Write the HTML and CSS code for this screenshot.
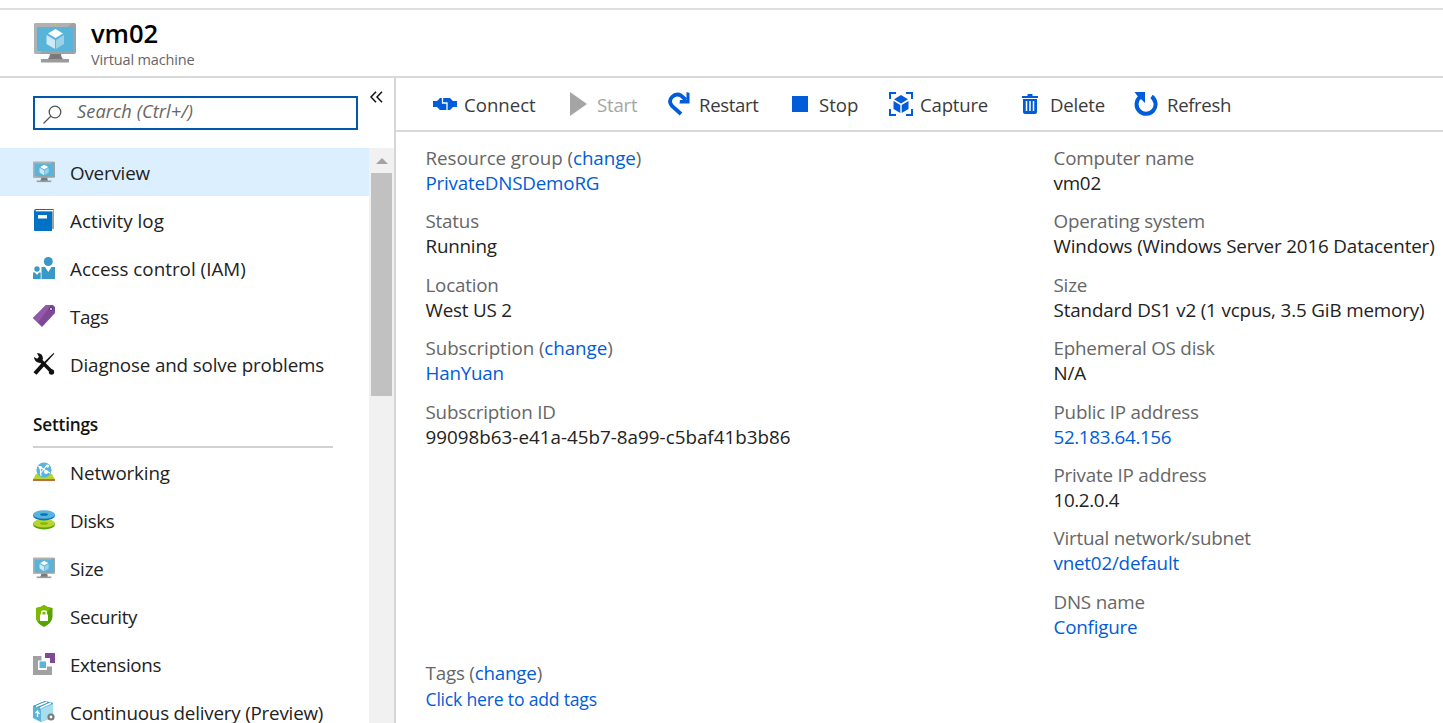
FILE: index.html
```html
<!DOCTYPE html>
<html lang="en">
<head>
<meta charset="utf-8">
<title>vm02 - Virtual machine</title>
<link rel="stylesheet" href="styles.css">
</head>
<body>
<svg width="0" height="0" class="defs">
  <symbol id="vm" viewBox="0 0 42 40">
    <rect width="42" height="31" rx="2" fill="#a0a1a2"/>
    <path d="M2 0H38L5 31H2Q0 31 0 29V2Q0 0 2 0Z" fill="#b0b1b2"/>
    <rect x="3" y="4" width="36" height="24" fill="#59b4d9"/>
    <path d="M16 31H27V36H35V39.500H7V36H14Q16 35 16 31Z" fill="#999b9c"/>
    <path d="M16 31H27Q27 34 29 36H14Q16 34 16 31Z" fill="#7a7a7a"/>
    <path d="M21.500 6 29 10.500 21.500 15 14 10.500Z" fill="#fff"/>
    <path d="M12.500 12 21 17V26L12.500 21Z" fill="#cde9f4"/>
    <path d="M30 12 22 17V26L30 21Z" fill="#9bd2e8"/>
    <circle cx="21" cy="1.800" r="1" fill="#b8d432"/>
  </symbol>
</svg>
<div class="page">
  <header class="header">
    <svg class="header-icon"><use href="#vm"/></svg>
    <div>
      <h1 class="title">vm02</h1>
      <p class="subtitle">Virtual machine</p>
    </div>
  </header>
  <div class="body">
    <nav class="sidebar">
      <div class="search-row">
        <div class="search">
          <svg width="20" height="20" viewBox="0 0 20 20" fill="none" stroke="#555" stroke-width="1.300"><circle cx="12" cy="7" r="5.800"/><path d="M8 11 .5 18.500"/></svg>
          <span>Search (Ctrl+/)</span>
        </div>
        <svg class="collapse" width="13" height="12" viewBox="0 0 13 12" fill="none" stroke="#111" stroke-width="1.500"><path d="M6 .7 1 6l5 5.300M12 .7 7 6l5 5.300"/></svg>
      </div>
      <div class="menu-wrap">
        <div class="menu">
          <a class="item active"><svg viewBox="0 0 42 40"><use href="#vm"/></svg><span>Overview</span></a>
          <a class="item"><svg viewBox="0 0 22 22"><path d="M3 1H21V20H19V3H2Z" fill="#a0a1a2"/><path d="M3 1H20V2.500H3Z" fill="#fff"/><path d="M1 2Q1 0 3 0H20.500V1H3Q2 1.700 3 2.500H19V22H2Q1 22 1 21Z" fill="#0072c6"/><path d="M5 6H14V9.500H5Z" fill="#fff"/></svg><span class="wide">Activity log</span></a>
          <a class="item"><svg viewBox="0 0 22 22" fill="#3999c6"><circle cx="15.300" cy="4.500" r="4.500"/><path d="M8.500 10H12L15.300 15 18.500 10H22V22H8.500Z"/><circle cx="4" cy="12" r="2.700"/><path d="M0 15.500H2L4 18 6 15.500H7.700V22H0Z"/></svg><span class="wide">Access control (IAM)</span></a>
          <a class="item"><svg viewBox="0 0 22 22"><path d="M13 0H20L22 2V8L9 22 0 13Z" fill="#804998"/><path d="M13 0H18L5 17.500 0 13Z" fill="#9159a8"/><circle cx="18" cy="4" r="1.500" fill="#fff" stroke="#4e2864"/></svg><span class="tight">Tags</span></a>
          <a class="item"><svg viewBox="0 0 22 22"><path d="M20.500 0 21.300.8 12 11 10.700 9.600Z" fill="#111"/><path d="M2 20.500 10 11.500" stroke="#111" stroke-width="4"/><path d="M5 5 19 19" stroke="#111" stroke-width="3.600"/><path d="M4 0Q10 0 10 6L7 10Q1 9 1 4L4.500 6 6 4Z" fill="#111"/><circle cx="18.500" cy="19" r="2.700" fill="#111"/></svg><span class="even">Diagnose and solve problems</span></a>
          <h2 class="section"><span>Settings</span></h2>
          <a class="item"><svg viewBox="0 0 22 22"><path d="M3 13H19L22 18.500H0Z" fill="#b8d432"/><path d="M0 18H22V20H0Z" fill="#b9713c"/><circle cx="11" cy="9" r="7.600" fill="#59b4d9"/><g fill="none" stroke="#fff" stroke-width="1.100"><path d="M5 5 17 12M7 13 14 4M7 6 8 15"/></g><g fill="#fff"><circle cx="7.500" cy="6.500" r="1.600"/><circle cx="14.500" cy="5" r="1.600"/><circle cx="13" cy="11" r="2"/></g></svg><span class="even">Networking</span></a>
          <a class="item"><svg viewBox="0 0 22 22"><ellipse cx="11" cy="15.700" rx="11" ry="4.700" fill="#57a300"/><ellipse cx="11" cy="14.200" rx="11" ry="4.300" fill="#b8d432"/><ellipse cx="11" cy="14.500" rx="4" ry="1.300" fill="#7fba00"/><ellipse cx="11" cy="6.800" rx="11" ry="4.700" fill="#0072c6"/><ellipse cx="11" cy="5.500" rx="11" ry="4.300" fill="#59b4d9"/><ellipse cx="11" cy="5.500" rx="4" ry="1.300" fill="#0072c6"/></svg><span class="tight">Disks</span></a>
          <a class="item"><svg viewBox="0 0 42 40"><use href="#vm"/></svg><span>Size</span></a>
          <a class="item"><svg viewBox="0 0 22 22"><path d="M11 0Q15 3 19.500 3V12Q19 18 11 22 3 18 3 12V3Q7 3 11 0Z" fill="#57a300"/><path d="M11 0Q15 3 18 3L5 17Q3 15 3 12V3Q7 3 11 0Z" fill="#7fba00"/><path d="M7 9.500H15V16H7Z" fill="#fff"/><path d="M8.700 10V7.500Q8.700 6 11 6T13.300 7.500V10" fill="none" stroke="#fff" stroke-width="1.500"/></svg><span class="tight">Security</span></a>
          <a class="item"><svg viewBox="0 0 22 22"><path d="M0 3H8.500V7.500H5V17H14V13.500H19V22H0Z" fill="#a0a1a2"/><path d="M12 0H22V10H17V5H12Z" fill="#804998"/><path d="M6.500 8.500H13V15H6.500Z" fill="#59b4d9"/></svg><span class="tight">Extensions</span></a>
          <a class="item"><svg viewBox="0 0 22 22"><path d="M0 5 12 0 20 2V16L8 21 0 17Z" fill="#59b4d9"/><path d="M8 8 20 3V16L8 21Z" fill="#a9dcef"/><path d="M0 5 12 0 20 2 8 7Z" fill="#3999c6"/><path d="M3 5.500 14 1M7 7 18 2" stroke="#fff" stroke-width="1.500"/><path d="M4.500 16V10M2.500 12 4.500 10 6.500 13" stroke="#fff" fill="none" stroke-width="1.300"/><circle cx="18" cy="16" r="2.500" fill="#fff" stroke="#7a7a7a" stroke-width="2.200"/></svg><span>Continuous delivery (Preview)</span></a>
        </div>
        <div class="scrollbar"><i class="arrow"></i><i class="thumb"></i></div>
      </div>
    </nav>
    <main class="main">
      <div class="toolbar">
        <a class="cmd connect"><svg width="24" height="24" viewBox="0 0 24 24"><path d="M0 9H4L7 6H17L20 9H24V15H20L17 18H7L4 15H0Z" fill="#015cda"/><path d="M9.500 6V11H14V18" fill="none" stroke="#fff" stroke-width="1.300"/></svg><span>Connect</span></a>
        <a class="cmd start"><svg width="17" height="24" viewBox="0 0 17 24"><path d="M0 0 17 12 0 24Z" fill="#a5a5a5"/></svg><span>Start</span></a>
        <a class="cmd restart"><svg width="22" height="24" viewBox="0 0 22 24"><path d="M13 22 4 14Q0 9 4 5T13 3.500L18 8" fill="none" stroke="#015cda" stroke-width="3.800"/><path d="M18.500 0 21.500 1V11.500H11.500L12 8H18.500Z" fill="#015cda"/></svg><span>Restart</span></a>
        <a class="cmd stop"><svg width="16" height="24" viewBox="0 0 16 24"><path d="M0 4H16V20H0Z" fill="#015cda"/></svg><span>Stop</span></a>
        <a class="cmd capture"><svg width="24" height="24" viewBox="0 0 24 24" fill="#015cda"><path d="M1 7V1H7M17 1H23V7M23 17V23H17M7 23H1V17" fill="none" stroke="#015cda" stroke-width="2"/><path d="M12 3 19 7.300 12 11.500 5 7.300ZM4.500 9 11.300 13V21L4.500 17ZM19.500 9 12.700 13V21L19.500 17Z"/></svg><span>Capture</span></a>
        <a class="cmd delete"><svg width="16" height="24" viewBox="0 0 16 24" fill="#015cda"><path d="M5.500 2H10.500V4H16V6H0V4H5.500ZM1 7H15V20Q15 22 13 22H3Q1 22 1 20Z"/><path d="M4.500 9V19M8 9V19M11.500 9V19" stroke="#fff" stroke-width="1.500"/></svg><span>Delete</span></a>
        <a class="cmd refresh"><svg width="24" height="24" viewBox="0 0 24 24"><path d="M17.500 4.500A9.500 9.500 0 1 1 6 5" fill="none" stroke="#015cda" stroke-width="4"/><path d="M.5 0H11V11L7.500 7.500 5 6Z" fill="#015cda"/></svg><span>Refresh</span></a>
      </div>
      <div class="essentials">
        <dl class="col left">
          <div><dt class="roomy">Resource group (<a>change</a>)</dt><dd><a>PrivateDNSDemoRG</a></dd></div>
          <div><dt>Status</dt><dd>Running</dd></div>
          <div><dt>Location</dt><dd>West US 2</dd></div>
          <div><dt class="roomy">Subscription (<a>change</a>)</dt><dd><a>HanYuan</a></dd></div>
          <div><dt>Subscription ID</dt><dd class="wide">99098b63-e41a-45b7-8a99-c5baf41b3b86</dd></div>
        </dl>
        <dl class="col right">
          <div><dt>Computer name</dt><dd>vm02</dd></div>
          <div><dt>Operating system</dt><dd class="even">Windows (Windows Server 2016 Datacenter)</dd></div>
          <div><dt>Size</dt><dd class="even">Standard DS1 v2 (1 vcpus, 3.5 GiB memory)</dd></div>
          <div><dt>Ephemeral OS disk</dt><dd>N/A</dd></div>
          <div><dt>Public IP address</dt><dd><a class="tight">52.183.64.156</a></dd></div>
          <div><dt>Private IP address</dt><dd class="tight">10.2.0.4</dd></div>
          <div><dt>Virtual network/subnet</dt><dd><a>vnet02/default</a></dd></div>
          <div><dt>DNS name</dt><dd><a>Configure</a></dd></div>
        </dl>
      </div>
      <div class="tags">
        <p>Tags (<a>change</a>)</p>
        <p><a>Click here to add tags</a></p>
      </div>
    </main>
  </div>
</div>
</body>
</html>
```
FILE: styles.css
```css
* { box-sizing: border-box; }
body { margin: 0; background: #fff; font: 18.8px/25px "Open Sans", "Noto Sans", sans-serif; letter-spacing: -.2px; color: #222; overflow: hidden; }
h1, h2, p, dl, dd { margin: 0; }
svg { display: block; flex: none; }
.defs { position: absolute; }
.page { height: 723px; padding-top: 8px; display: flex; flex-direction: column; overflow: hidden; }
.header { flex: none; height: 70px; display: flex; gap: 15px; padding: 9px 0 0 34px; border-top: 2px solid #dedede; border-bottom: 2px solid #d9d9d9; }
.header-icon { width: 42px; height: 40px; margin-top: 4px; }
.title { font-size: 25.6px; line-height: 30px; font-weight: 600; color: #000; letter-spacing: -.1px; }
.subtitle { font-size: 14.5px; line-height: 20px; color: #666; letter-spacing: -.15px; padding-top: 1px; }
.body { flex: 1; min-height: 0; display: flex; }
.sidebar { width: 396px; flex: none; border-right: 2px solid #d6d6d6; display: flex; flex-direction: column; }
.search-row { flex: none; height: 70px; padding: 18px 0 0 33px; display: flex; gap: 12px; align-items: flex-start; }
.search { width: 325px; height: 34px; border: 2px solid #0058ad; display: flex; align-items: center; padding: 0 0 3px 8px; gap: 14px; color: #666; font-style: italic; font-size: 18.2px; letter-spacing: .08px; }
.search svg { margin-top: 6px; }
.collapse { margin-top: -5px; }
.menu-wrap { flex: 1; min-height: 0; display: flex; overflow: hidden; }
.menu { width: 369px; flex: none; }
.item { height: 48px; display: flex; align-items: center; gap: 15px; padding: 2px 0 0 33px; white-space: nowrap; }
.item svg { width: 22px; height: 22px; margin-top: -2px; }
.active { background: #dcefff; }
.section { height: 60px; padding: 24px 0 0 33px; font-size: 17.2px; line-height: 25px; font-weight: 600; color: #111; }
.section span { display: block; width: 300px; height: 36px; border-bottom: 2px solid #d1d1d1; }
.scrollbar { width: 25px; background: #f1f1f1; display: flex; flex-direction: column; align-items: center; padding-top: 10px; }
.arrow { border: 6px solid transparent; border-top: 0; border-bottom-color: #a3a3a3; }
.thumb { width: 21px; height: 223px; margin-top: 9px; background: #c1c1c1; }
.main { flex: 1; min-width: 0; display: flex; flex-direction: column; }
.toolbar { flex: none; height: 54px; border-bottom: 2px solid #d9d9d9; display: flex; padding-left: 37px; color: #3b3b3b; font-size: 18.6px; }
.cmd { height: 53px; display: flex; align-items: center; flex: none; }
.cmd svg { margin-top: -2px; }
.connect { width: 137px; gap: 7px; letter-spacing: 0; }
.start { width: 98px; gap: 10px; color: #a5a5a5; }
.restart { width: 124px; gap: 9px; letter-spacing: -.35px; }
.stop { width: 97px; gap: 11px; letter-spacing: 0; }
.capture { width: 133px; gap: 7px; }
.delete { width: 112px; gap: 12px; }
.refresh { gap: 9px; letter-spacing: -.35px; }
.essentials { display: flex; padding: 14px 0 0 29.5px; height: 529px; flex: none; white-space: nowrap; }
.left { width: 628px; }
.col { display: flex; flex-direction: column; gap: 13.4px; }
dt, .tags { color: #666; }
a { color: inherit; }
dt a, dd a, .tags a { color: #015cda; }
.tags { padding-left: 29.5px; }
.tags p + p { font-size: 17.6px; padding-top: 1px; }
.roomy { letter-spacing: -.07px; }
.wide { letter-spacing: .02px; }
.even { letter-spacing: -.14px; }
.tight { letter-spacing: -.35px; }
```
